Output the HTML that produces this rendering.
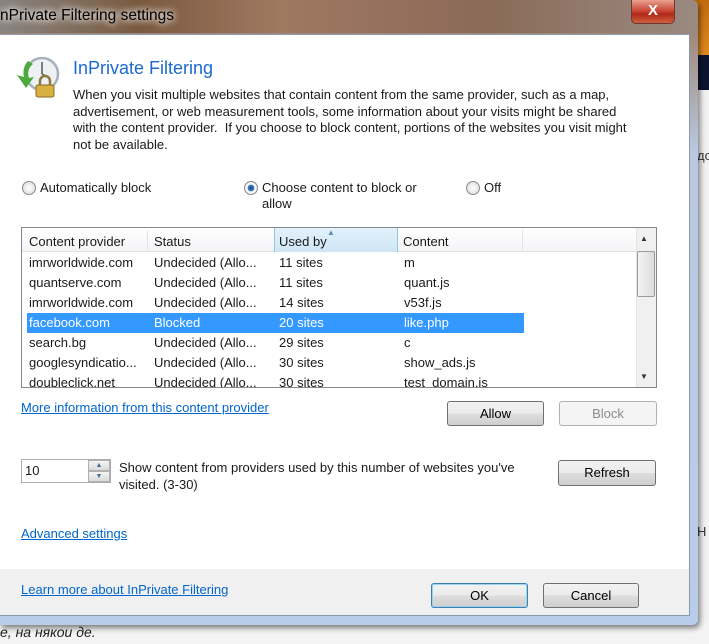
<!DOCTYPE html>
<html><head><meta charset="utf-8"><style>
*{margin:0;padding:0;box-sizing:border-box}
body{width:709px;height:644px;overflow:hidden;position:relative;background:#f4f4f4;font-family:"Liberation Sans",sans-serif;font-size:12.5px;color:#1a1a1a}
.a{position:absolute}
.btn{position:absolute;border:1px solid #707070;border-radius:3px;background:linear-gradient(#f2f2f2 0%,#ebebeb 50%,#dddddd 51%,#cfcfcf 100%);text-align:center;font-size:13px;color:#000}
.lnk{color:#0066cc;text-decoration:underline;position:absolute;font-size:13px}
.row{position:absolute;left:27px;height:20px;width:497px;font-size:13px;line-height:20px}
.row span{position:absolute}
.radio{position:absolute;width:14px;height:14px;border-radius:50%;border:1px solid #8a8a8a;background:radial-gradient(#fff,#d8d8d8)}
</style></head><body>
<div class="a" style="left:690px;top:0;width:19px;height:55px;background:linear-gradient(#c06a10,#e08a20)"></div>
<div class="a" style="left:690px;top:55px;width:19px;height:35px;background:#0c1530"></div>
<div class="a" style="left:690px;top:90px;width:19px;height:530px;background:#f2f2f2"></div>
<div class="a" style="left:697px;top:148px;font-size:13px;color:#333">до</div>
<div class="a" style="left:697px;top:524px;font-size:13px;color:#333">Н</div>
<div class="a" style="left:0;top:624px;font-size:14px;font-style:italic;color:#222">е, на някои де.</div>
<div class="a" style="left:0;top:0;width:698px;height:625px;background:linear-gradient(90deg,#8a8480 0%,#7a5a40 20%,#a07860 40%,#8a6a58 70%,#9a8a80 100%);border-radius:0 6px 6px 0;box-shadow:2px 3px 6px rgba(0,0,0,.5)"></div>
<div class="a" style="left:0;top:33px;width:698px;height:592px;background:linear-gradient(#a08878,#b8c8e0 20%,#b8cdea);border-radius:0 0 6px 0"></div>
<div class="a" style="left:0;top:7px;font-size:15.5px;color:#000;text-shadow:0 0 8px #fff,0 0 8px #fff">nPrivate Filtering settings</div>
<div class="a" style="left:631px;top:0;width:44px;height:24px;border:1px solid #6a3a30;border-top:0;border-radius:0 0 5px 5px;background:linear-gradient(#e8a090,#c84030 50%,#b02818 60%,#d06040);color:#fff;font-weight:bold;font-size:15px;text-align:center;line-height:22px">X</div>
<div class="a" style="left:0;top:34px;width:690px;height:582px;background:#fff;border:1px solid #8a9ab0;border-left:0"></div>
<div class="a" style="left:0;top:569px;width:689px;height:46px;background:#f0f0f0"></div>
<svg class="a" style="left:15px;top:56px" width="46" height="42" viewBox="0 0 46 42">
<circle cx="27" cy="18" r="16" fill="#eef1f4" stroke="#a8b0ba" stroke-width="2.5"/>
<line x1="27" y1="18" x2="27" y2="6" stroke="#555" stroke-width="1.5"/>
<line x1="27" y1="18" x2="35" y2="22" stroke="#555" stroke-width="1.5"/>
<path d="M13 5 A17 17 0 0 0 9 21 L2 19 L11 32 L19 21 L14 22 A12 12 0 0 1 18 8Z" fill="#4caa3c"/>
<path d="M25 30 v-5 a5 5 0 0 1 10 0 v5" fill="none" stroke="#8a7a40" stroke-width="2.5"/>
<rect x="21" y="29" width="18" height="12" rx="2" fill="#d8b040" stroke="#8a6a20"/>
</svg>
<div class="a" style="left:73px;top:58px;font-size:18px;color:#1a6ad0">InPrivate Filtering</div>
<div class="a" style="left:73px;top:87px;white-space:nowrap;font-size:13px;line-height:16.5px">When you visit multiple websites that contain content from the same provider, such as a map,<br>advertisement, or web measurement tools, some information about your visits might be shared<br>with the content provider.&nbsp; If you choose to block content, portions of the websites you visit might<br>not be available.</div>
<div class="radio" style="left:22px;top:181px"></div>
<div class="a" style="left:40px;top:180px;font-size:13px">Automatically block</div>
<div class="radio" style="left:244px;top:181px;background:radial-gradient(#1a4a8a 0,#3a7ac0 35%,#fff 45%,#d8d8d8)"></div>
<div class="a" style="left:262px;top:180px;font-size:13px;line-height:16px;width:180px">Choose content to block or allow</div>
<div class="radio" style="left:466px;top:181px"></div>
<div class="a" style="left:484px;top:180px;font-size:13px">Off</div>
<div class="a" style="left:21px;top:227px;width:636px;height:161px;border:1px solid #828790;background:#fff;overflow:hidden">
 <div class="a" style="left:0;top:0;width:614px;height:24px;background:linear-gradient(#fff,#f3f4f6);border-bottom:1px solid #e0e2e6"></div>
 <div class="a" style="left:252px;top:0;width:124px;height:24px;background:linear-gradient(#e3f1fb,#cfe6f6);border-left:1px solid #96c2e4;border-right:1px solid #96c2e4"></div>
 <div class="a" style="left:125px;top:2px;width:1px;height:20px;background:#e0e2e6"></div>
 <div class="a" style="left:500px;top:2px;width:1px;height:20px;background:#e0e2e6"></div>
 <div class="a" style="left:7px;top:6px;font-size:13px">Content provider</div>
 <div class="a" style="left:132px;top:6px;font-size:13px">Status</div>
 <div class="a" style="left:257px;top:6px;font-size:13px">Used by</div>
 <div class="a" style="left:305px;top:0;font-size:8px;color:#5a8ab8">▲</div>
 <div class="a" style="left:381px;top:6px;font-size:13px">Content</div>
 <div class="a" style="left:614px;top:0;width:20px;height:159px;background:#f0f0f0;border-left:1px solid #e4e4e4"></div>
 <div class="a" style="left:618px;top:6px;font-size:8px;color:#333">▲</div>
 <div class="a" style="left:618px;top:144px;font-size:8px;color:#333">▼</div>
 <div class="a" style="left:615px;top:23px;width:18px;height:46px;border:1px solid #9a9a9a;border-radius:2px;background:linear-gradient(90deg,#f4f4f4,#dcdcdc)"></div>
</div>
<div class="row" style="top:253px"><span style="left:2px">imrworldwide.com</span><span style="left:127px">Undecided (Allo...</span><span style="left:252px">11 sites</span><span style="left:377px">m</span></div>
<div class="row" style="top:273px"><span style="left:2px">quantserve.com</span><span style="left:127px">Undecided (Allo...</span><span style="left:252px">11 sites</span><span style="left:377px">quant.js</span></div>
<div class="row" style="top:293px"><span style="left:2px">imrworldwide.com</span><span style="left:127px">Undecided (Allo...</span><span style="left:252px">14 sites</span><span style="left:377px">v53f.js</span></div>
<div class="row" style="top:313px;background:#3399ff;color:#fff"><span style="left:2px">facebook.com</span><span style="left:127px">Blocked</span><span style="left:252px">20 sites</span><span style="left:377px">like.php</span></div>
<div class="row" style="top:333px"><span style="left:2px">search.bg</span><span style="left:127px">Undecided (Allo...</span><span style="left:252px">29 sites</span><span style="left:377px">c</span></div>
<div class="row" style="top:353px"><span style="left:2px">googlesyndicatio...</span><span style="left:127px">Undecided (Allo...</span><span style="left:252px">30 sites</span><span style="left:377px">show_ads.js</span></div>
<div class="a" style="left:22px;top:373px;width:613px;height:14px;overflow:hidden"><div class="row" style="left:5px;top:0"><span style="left:2px">doubleclick.net</span><span style="left:127px">Undecided (Allo...</span><span style="left:252px">30 sites</span><span style="left:377px">test_domain.js</span></div></div>
<div class="lnk" style="left:21px;top:400px">More information from this content provider</div>
<div class="btn" style="left:447px;top:401px;width:97px;height:25px;line-height:23px">Allow</div>
<div class="btn" style="left:559px;top:401px;width:98px;height:25px;line-height:23px;background:#f4f4f4;border-color:#adb2b5;color:#8a8a8a">Block</div>
<div class="a" style="left:21px;top:459px;width:90px;height:24px;border:1px solid #abadb3;background:#fff"></div>
<div class="a" style="left:25px;top:463px;font-size:13px">10</div>
<div class="a" style="left:88px;top:460px;width:22px;height:11px;border:1px solid #b0b0b0;background:linear-gradient(#f4f4f4,#dadada);font-size:7px;text-align:center;color:#4a6a9a;line-height:10px">▲</div>
<div class="a" style="left:88px;top:471px;width:22px;height:11px;border:1px solid #b0b0b0;background:linear-gradient(#f4f4f4,#dadada);font-size:7px;text-align:center;color:#4a6a9a;line-height:10px">▼</div>
<div class="a" style="left:119px;top:460px;width:420px;font-size:13px;line-height:16.5px">Show content from providers used by this number of websites you've visited. (3-30)</div>
<div class="btn" style="left:558px;top:460px;width:98px;height:26px;line-height:24px">Refresh</div>
<div class="lnk" style="left:21px;top:526px">Advanced settings</div>
<div class="lnk" style="left:21px;top:582px">Learn more about InPrivate Filtering</div>
<div class="btn" style="left:431px;top:583px;width:97px;height:25px;line-height:23px;border-color:#3c7fb1;box-shadow:inset 0 0 0 1px #9ad4f4">OK</div>
<div class="btn" style="left:543px;top:583px;width:96px;height:25px;line-height:23px">Cancel</div>
</body></html>
